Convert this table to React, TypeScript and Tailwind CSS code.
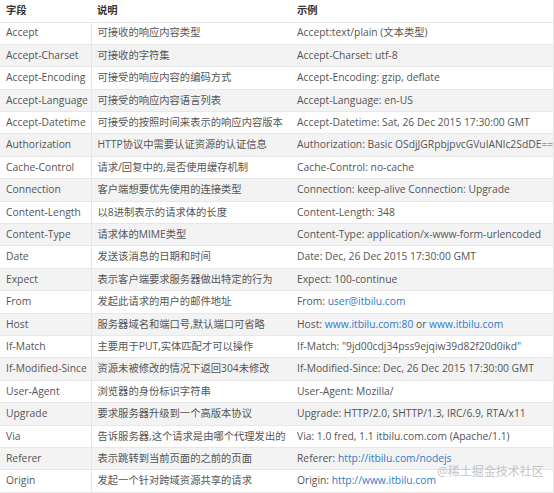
const rows: [string, string, React.ReactNode][] = [
  ["Accept", "可接收的响应内容类型", "Accept:text/plain (文本类型)"],
  ["Accept-Charset", "可接收的字符集", "Accept-Charset: utf-8"],
  ["Accept-Encoding", "可接受的响应内容的编码方式", "Accept-Encoding: gzip, deflate"],
  ["Accept-Language", "可接受的响应内容语言列表", "Accept-Language: en-US"],
  ["Accept-Datetime", "可接受的按照时间来表示的响应内容版本", "Accept-Datetime: Sat, 26 Dec 2015 17:30:00 GMT"],
  ["Authorization", "HTTP协议中需要认证资源的认证信息", "Authorization: Basic OSdjJGRpbjpvcGVuIANlc2SdDE=="],
  ["Cache-Control", "请求/回复中的,是否使用缓存机制", "Cache-Control: no-cache"],
  ["Connection", "客户端想要优先使用的连接类型", "Connection: keep-alive Connection: Upgrade"],
  ["Content-Length", "以8进制表示的请求体的长度", "Content-Length: 348"],
  ["Content-Type", "请求体的MIME类型", "Content-Type: application/x-www-form-urlencoded"],
  ["Date", "发送该消息的日期和时间", "Date: Dec, 26 Dec 2015 17:30:00 GMT"],
  ["Expect", "表示客户端要求服务器做出特定的行为", "Expect: 100-continue"],
  [
    "From",
    "发起此请求的用户的邮件地址",
    <>
      From: <a className="text-[#2f7bc9]">user@itbilu.com</a>
    </>,
  ],
  [
    "Host",
    "服务器域名和端口号,默认端口可省略",
    <>
      Host: <a className="text-[#2f7bc9]">www.itbilu.com:80</a> or{" "}
      <a className="text-[#2f7bc9]">www.itbilu.com</a>
    </>,
  ],
  ["If-Match", "主要用于PUT,实体匹配才可以操作", 'If-Match: "9jd00cdj34pss9ejqiw39d82f20d0ikd"'],
  ["If-Modified-Since", "资源未被修改的情况下返回304未修改", "If-Modified-Since: Dec, 26 Dec 2015 17:30:00 GMT"],
  ["User-Agent", "浏览器的身份标识字符串", "User-Agent: Mozilla/"],
  ["Upgrade", "要求服务器升级到一个高版本协议", "Upgrade: HTTP/2.0, SHTTP/1.3, IRC/6.9, RTA/x11"],
  ["Via", "告诉服务器,这个请求是由哪个代理发出的", "Via: 1.0 fred, 1.1 itbilu.com.com (Apache/1.1)"],
  [
    "Referer",
    "表示跳转到当前页面的之前的页面",
    <>
      Referer: <a className="text-[#2f7bc9]">http://itbilu.com/nodejs</a>
    </>,
  ],
  [
    "Origin",
    "发起一个针对跨域资源共享的请求",
    <>
      Origin: <a className="text-[#2f7bc9]">http://www.itbilu.com</a>
    </>,
  ],
];

export default function App() {
  return (
    <div
      className="relative w-[554px] h-[493px] overflow-hidden bg-white text-[10.3px] text-[#555]"
      style={{ fontFamily: '"Open Sans", "Noto Sans CJK SC", sans-serif' }}
    >
      <table className="w-full border-collapse table-fixed border-r border-[#e6e6e6]">
        <colgroup>
          <col className="w-[91px]" />
          <col className="w-[200px]" />
          <col />
        </colgroup>
        <thead>
          <tr className="h-[22px] border-b border-[#e6e6e6]">
            <th className="text-left font-bold text-[#333] pl-[6px]">字段</th>
            <th className="text-left font-bold text-[#333] pl-[6px]">说明</th>
            <th className="text-left font-bold text-[#333] pl-[6px]">示例</th>
          </tr>
        </thead>
        <tbody>
          {rows.map(([name, desc, example], i) => (
            <tr
              key={name}
              className={
                "h-[22.4px] border-b border-[#e8e8e8] " +
                (i % 2 === 1 ? "bg-[#f3f3f3]" : "bg-white")
              }
            >
              <td className="pl-[6px] whitespace-nowrap border-r border-[#e6e6e6]">
                {name}
              </td>
              <td className="pl-[6px] whitespace-nowrap overflow-hidden">{desc}</td>
              <td className="pl-[6px] whitespace-nowrap overflow-hidden">{example}</td>
            </tr>
          ))}
        </tbody>
      </table>
      <div className="absolute left-[437px] top-[463px] text-[12px] text-[#c4c4c4]">
        @稀土掘金技术社区
      </div>
    </div>
  );
}
